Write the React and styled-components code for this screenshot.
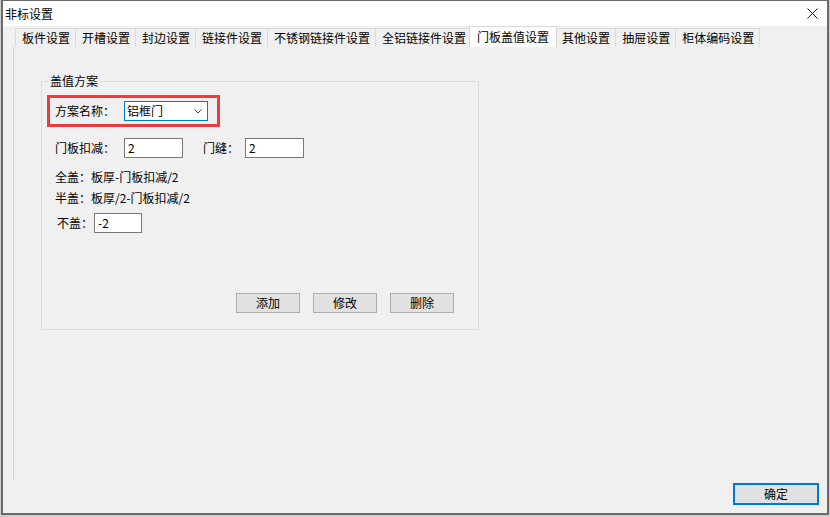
import React from 'react';
import styled, { createGlobalStyle } from 'styled-components';

const Global = createGlobalStyle`
  html, body { margin: 0; padding: 0; background: #cdcdcd; }
  body {
    font-family: "Noto Sans CJK SC", "Noto Sans", "Liberation Sans", sans-serif;
    font-size: 12px;
    color: #000;
  }
  * { box-sizing: border-box; }
`;

const Window = styled.div`
  margin-left: 1px;
  width: 828px;
  height: 515px;
  border: 2px solid #6a6a6a;
  border-top-width: 1px;
  display: flex;
  flex-direction: column;
  background: #f0f0f0;
`;

const TitleBar = styled.div`
  flex: none;
  height: 25px;
  background: #fff;
  display: flex;
  align-items: center;
  justify-content: space-between;
  padding: 0 9px 0 2px;
`;

const Title = styled.span`
  font-size: 12px;
  line-height: 16px;
`;

const Body = styled.div`
  flex: 1;
  display: flex;
  flex-direction: column;
  min-height: 0;
`;

const TabStrip = styled.div`
  flex: none;
  height: 21px;
  margin-left: 12px;
  display: flex;
  align-items: flex-end;
`;

const Tab = styled.div`
  position: relative;
  z-index: ${p => (p.$active ? 1 : 0)};
  height: ${p => (p.$active ? 21 : 19)}px;
  margin: ${p => (p.$active ? '0 -2px' : '0')};
  padding: ${p => (p.$active ? '0 7px' : '0 5px 0 6px')};
  border: 1px solid #d9d9d9;
  border-bottom: none;
  border-right: ${p => (p.$active || p.$last ? '1px solid #d9d9d9' : 'none')};
  background: ${p => (p.$active ? '#fff' : '#f0f0f0')};
  font-size: 12px;
  line-height: ${p => (p.$active ? 20 : 18)}px;
  white-space: nowrap;
`;

const Panel = styled.div`
  flex: 1;
  margin-left: 10px;
  border-left: 1px solid #d6d6d6;
  padding-left: 27px;
`;

const Group = styled.fieldset`
  width: 438px;
  margin: 27px 0 0 0;
  padding: 0 24px 16px 5px;
  border: 1px solid #dcdcdc;
  min-inline-size: 0;
`;

const Legend = styled.legend`
  margin-left: 1px;
  padding: 0 2px;
  font-size: 12px;
  line-height: 14px;
`;

const HighlightRow = styled.div`
  margin-top: 7px;
  width: 173px;
  height: 32px;
  border: 3px solid #ee3b3d;
  padding-left: 5px;
  display: flex;
  align-items: center;
`;

const Label = styled.span`
  flex: none;
  width: ${p => p.$w}px;
  margin-left: ${p => p.$ml || 0}px;
  font-size: 12px;
  line-height: 16px;
  white-space: nowrap;
`;

const Select = styled.div`
  width: 84px;
  height: 20px;
  border: 1px solid #0078d7;
  background: #fff;
  display: flex;
  align-items: center;
  justify-content: space-between;
  padding: 0 5px 0 2px;
  font-size: 12px;
  line-height: 16px;
`;

const Row = styled.div`
  display: flex;
  align-items: center;
  margin-top: ${p => p.$mt}px;
  padding-left: ${p => p.$pl}px;
  height: 20px;
`;

const Input = styled.div`
  flex: none;
  width: ${p => p.$w}px;
  height: 20px;
  border: 1px solid #7a7a7a;
  background: #fff;
  padding-left: 3px;
  font-size: 12px;
  line-height: 18px;
`;

const TextLine = styled.div`
  margin-top: ${p => p.$mt}px;
  padding-left: 8px;
  height: 20px;
  line-height: 20px;
  font-size: 12px;
  white-space: nowrap;
`;

const ButtonRow = styled.div`
  margin-top: 60px;
  display: flex;
  justify-content: flex-end;
  gap: 13px;
`;

const Button = styled.div`
  width: ${p => p.$w || 64}px;
  height: ${p => p.$h || 20}px;
  border: ${p => (p.$default ? '2px solid #0078d7' : '1px solid #adadad')};
  background: #e1e1e1;
  display: flex;
  align-items: center;
  justify-content: center;
  font-size: 12px;
  line-height: 16px;
`;

const Footer = styled.div`
  flex: none;
  display: flex;
  justify-content: flex-end;
  padding: 2px 8px 8px 0;
`;

const tabs = ['板件设置', '开槽设置', '封边设置', '链接件设置', '不锈钢链接件设置', '全铝链接件设置', '门板盖值设置', '其他设置', '抽屉设置', '柜体编码设置'];

export default function App() {
  return (
    <>
      <Global />
      <Window>
        <TitleBar>
          <Title>非标设置</Title>
          <svg width="11" height="11" viewBox="0 0 11 11">
            <path d="M0.5 0.5 L10.5 10.5 M10.5 0.5 L0.5 10.5" stroke="#1a1a1a" strokeWidth="1" fill="none" />
          </svg>
        </TitleBar>
        <Body>
          <TabStrip>
            {tabs.map((t, i) => (
              <Tab key={t} $active={i === 6} $last={i === tabs.length - 1}>{t}</Tab>
            ))}
          </TabStrip>
          <Panel>
            <Group>
              <Legend>盖值方案</Legend>
              <HighlightRow>
                <Label $w={69}>方案名称：</Label>
                <Select>
                  <span>铝框门</span>
                  <svg width="8" height="5" viewBox="0 0 8 5">
                    <path d="M0.5 0.5 L4 4 L7.5 0.5" stroke="#444" strokeWidth="1" fill="none" />
                  </svg>
                </Select>
              </HighlightRow>
              <Row $mt={11} $pl={8}>
                <Label $w={69}>门板扣减：</Label>
                <Input $w={59}>2</Input>
                <Label $w={42} $ml={20}>门缝：</Label>
                <Input $w={59}>2</Input>
              </Row>
              <TextLine $mt={9}>全盖：板厚-门板扣减/2</TextLine>
              <TextLine $mt={1}>半盖：板厚/2-门板扣减/2</TextLine>
              <Row $mt={5} $pl={10}>
                <Label $w={37}>不盖：</Label>
                <Input $w={48}>-2</Input>
              </Row>
              <ButtonRow>
                <Button>添加</Button>
                <Button>修改</Button>
                <Button>删除</Button>
              </ButtonRow>
            </Group>
          </Panel>
          <Footer>
            <Button $default $w={86} $h={22}>确定</Button>
          </Footer>
        </Body>
      </Window>
    </>
  );
}
